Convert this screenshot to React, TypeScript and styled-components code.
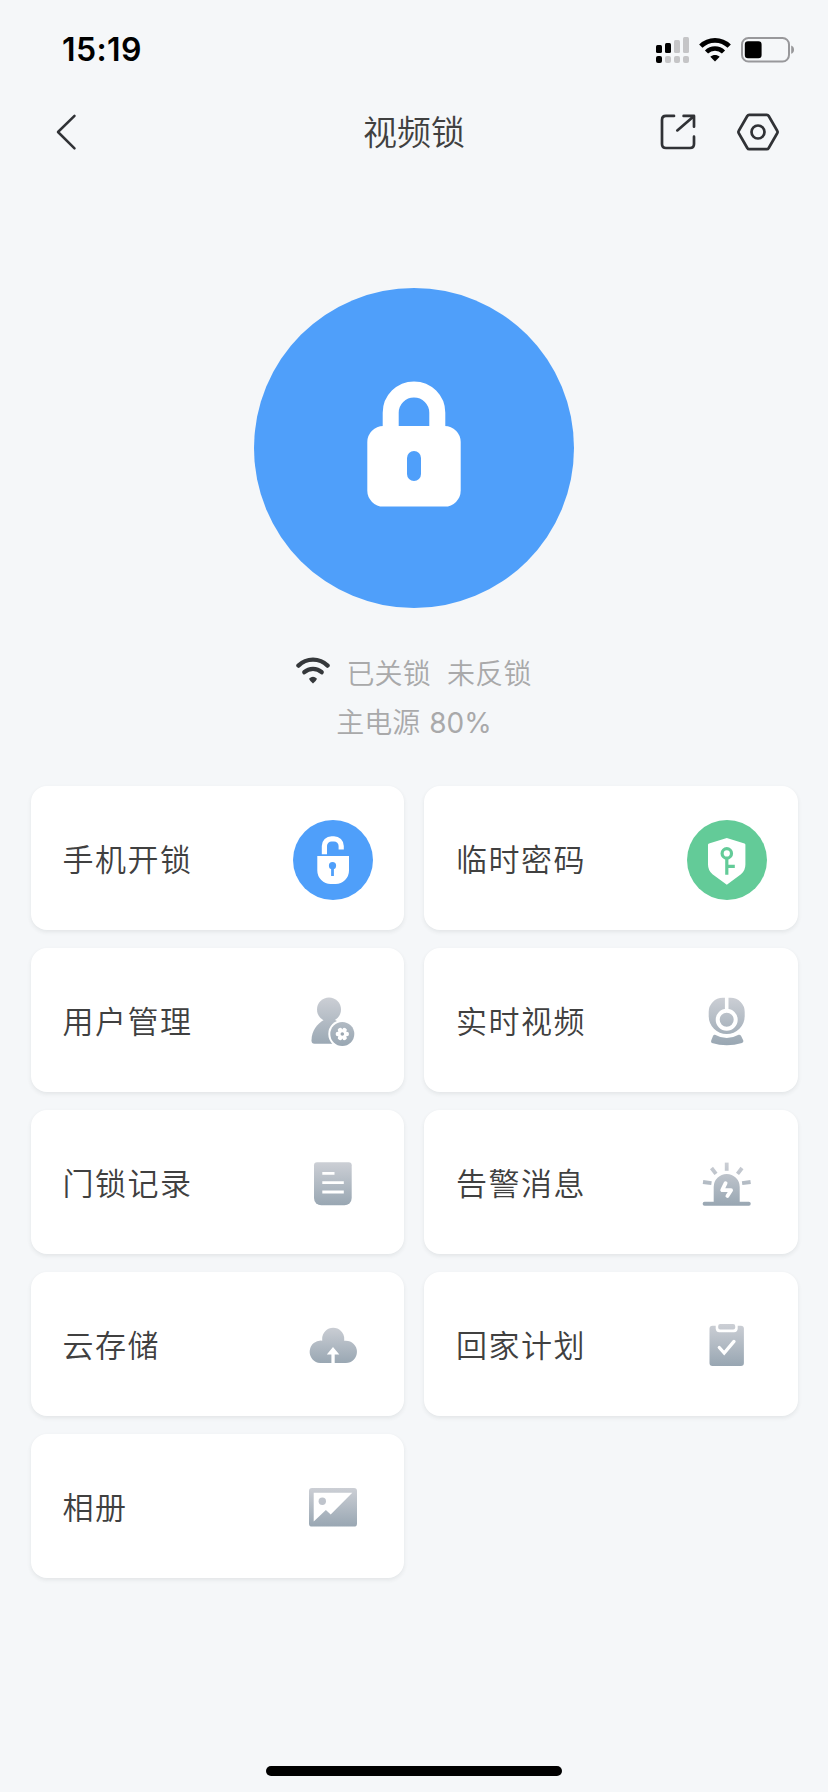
import React from "react";
import styled, { createGlobalStyle } from "styled-components";

const GlobalStyle = createGlobalStyle`
  * { box-sizing: border-box; }
  html, body { margin: 0; padding: 0; background: #f5f7f9; }
  svg { display: block; flex: none; }
`;

const Screen = styled.div`
  display: flex;
  flex-direction: column;
  width: 828px;
  height: 1792px;
  background: #f5f7f9;
  color: #404040;
  font-family: Inter, "Noto Sans CJK SC", sans-serif;
`;

const StatusBar = styled.div`
  display: flex;
  align-items: center;
  justify-content: space-between;
  height: 99px;
  padding: 0 33px 0 62px;
`;

const Clock = styled.div`
  font-size: 32px;
  font-weight: 600;
  line-height: 40px;
  letter-spacing: 0.4px;
  color: #000;
`;

const StatusIcons = styled.div`
  display: flex;
  align-items: center;
  gap: 10px;
`;

const NavBar = styled.header`
  display: grid;
  grid-template-columns: 1fr auto 1fr;
  align-items: center;
  height: 66px;
  padding: 0 47px 0 54px;
`;

const Title = styled.h1`
  margin: 0 7px 3px 0;
  font-size: 34px;
  font-weight: 350;
  line-height: 50px;
  font-family: "Noto Sans CJK SC", sans-serif;
`;

const NavActions = styled.div`
  display: flex;
  justify-content: flex-end;
  gap: 38px;
`;

const LockButton = styled.div`
  display: flex;
  align-self: center;
  width: 320px;
  height: 320px;
  margin-top: 123px;
  border-radius: 50%;
  background: #4f9ffa;
`;

const LockState = styled.div`
  display: flex;
  flex-direction: column;
  align-items: center;
  height: 98px;
  margin: 42px 0 38px;
  color: #a9a9aa;
  font-size: 28px;
  font-weight: 350;
`;

const StateLine = styled.div`
  display: flex;
  align-items: center;
  height: 49px;
  line-height: 49px;

  > svg {
    margin-bottom: 8px;
  }
`;

const StateText = styled.span<{ $before: number }>`
  margin-left: ${(p) => p.$before}px;
  letter-spacing: 0.2px;
`;

const Percent = styled.span`
  margin-left: 9px;
  font-weight: 400;
`;

const CardGrid = styled.main`
  display: grid;
  grid-template-columns: 1fr 1fr;
  gap: 18px 20px;
  padding: 0 30.5px;
`;

const Card = styled.div`
  display: flex;
  align-items: center;
  justify-content: space-between;
  height: 144px;
  padding: 4px 31px 0 32px;
  border-radius: 16px;
  background: #fff;
  box-shadow: 0 2px 4px rgba(40, 50, 60, 0.09);
`;

const CardLabel = styled.span`
  font-size: 31px;
  line-height: 46px;
  letter-spacing: 1.5px;
  font-weight: 350;
`;

const HomeIndicator = styled.div`
  align-self: center;
  width: 296px;
  height: 10px;
  margin: auto 0 16px;
  border-radius: 5px;
  background: #000;
`;

const SignalIcon = () => (
  <svg width="33" height="26" viewBox="0 0 33 26" fill="#c5c5c7">
    <rect y="8" width="6" height="8" rx="1.5" fill="#000" />
    <rect x="9" y="6" width="6" height="10" rx="1.5" fill="#000" />
    <rect x="18" y="3" width="6" height="13" rx="1.5" />
    <rect x="27" y="0" width="6" height="16" rx="1.5" />
    <rect y="19" width="6" height="7" rx="2" fill="#000" />
    <rect x="9" y="19" width="6" height="7" rx="2" />
    <rect x="18" y="19" width="6" height="7" rx="2" />
    <rect x="27" y="19" width="6" height="7" rx="2" />
  </svg>
);

const WifiStatusIcon = () => (
  <svg width="32" height="24" viewBox="0 0 32 24" fill="none" stroke="#000">
    <path d="M1.8 8.2C9.6.4 22.4.4 30.2 8.2" strokeWidth="4.7" />
    <path d="M7.5 14C12.2 9.4 19.8 9.4 24.5 14" strokeWidth="4.5" />
    <path d="M11.3 18.7C14 16.4 18 16.4 20.7 18.7L16 23.6Z" fill="#000" stroke="none" />
  </svg>
);

const BatteryIcon = () => (
  <svg width="54" height="26" viewBox="0 0 54 26">
    <rect x="1" y="1" width="47" height="23.5" rx="6.5" fill="none" stroke="#98989b" strokeWidth="2" />
    <rect x="3.8" y="4.2" width="16.8" height="17" rx="3.2" />
    <path d="M50.2 8.6a4.4 4.4 0 0 1 0 8.2z" fill="#98989b" />
  </svg>
);

const BackIcon = () => (
  <svg width="26" height="40" viewBox="0 0 26 40" fill="none" stroke="#303236" strokeWidth="2.5" strokeLinecap="round" strokeLinejoin="round">
    <path d="M20.5 3.8 4 20l16.5 16.3" />
  </svg>
);

const ShareIcon = () => (
  <svg width="38" height="40" viewBox="0 0 38 40" fill="none" stroke="#303236" strokeWidth="2.7" strokeLinecap="round" strokeLinejoin="round">
    <path d="M15 3.9H7Q3 3.9 3 7.9V32Q3 36 7 36H31Q35 36 35 32V24.7" />
    <path d="M24.6 3.9H35V14.7M18.3 18.4 34.2 4.7" />
  </svg>
);

const SettingsIcon = () => (
  <svg width="46" height="40" viewBox="0 0 46 40" fill="none" stroke="#303236" strokeWidth="2.7" strokeLinejoin="round">
    <path d="M14.2 2.8H31.8Q33 2.8 33.7 4L42.2 18.7Q43 20 42.2 21.3L33.7 36Q33 37.2 31.8 37.2H14.2Q13 37.2 12.3 36L3.8 21.3Q3 20 3.8 18.7L12.3 4Q13 2.8 14.2 2.8Z" />
    <circle cx="23" cy="20" r="6.5" />
  </svg>
);

const PadlockIcon = () => (
  <svg width="320" height="320" viewBox="0 0 320 320">
    <path d="M136.7 142V124.7a23.3 23.3 0 0 1 46.6 0V142" fill="none" stroke="#fff" strokeWidth="16" />
    <rect x="113.3" y="138" width="93.4" height="80.6" rx="16" fill="#fff" />
    <rect x="153" y="163" width="14" height="30" rx="7" fill="#4f9ffa" />
  </svg>
);

const WifiSmallIcon = () => (
  <svg width="34" height="28" viewBox="0 0 34 28" fill="none" stroke="#35383b" strokeLinecap="round">
    <path d="M2.4 8.6C10.6.6 23.4.6 31.6 8.6" strokeWidth="4.3" />
    <path d="M8.3 15.2C13.2 10.8 20.8 10.8 25.7 15.2" strokeWidth="4.3" />
    <path d="M13 21.8Q17 17.6 21 21.8Q20 24.3 17 26.6Q14 24.3 13 21.8Z" fill="#35383b" stroke="none" />
  </svg>
);

const CardIcon = ({ children }: { children: React.ReactNode }) => (
  <svg width="80" height="80" viewBox="0 0 80 80">{children}</svg>
);

const Silver = ({ id, top, bottom }: { id: string; top: number; bottom: number }) => (
  <linearGradient id={id} gradientUnits="userSpaceOnUse" x1="40" y1={top} x2="40" y2={bottom}>
    <stop offset="0" stopColor="#cccfd5" />
    <stop offset="1" stopColor="#98a6b2" />
  </linearGradient>
);

const UnlockIcon = () => (
  <CardIcon>
    <circle cx="40" cy="40" r="40" fill="#4f9ffa" />
    <path d="M31.4 34.2V26a7.2 7.2 0 0 1 7.2-7.2H41a7.2 7.2 0 0 1 7.2 7.2v3.4" fill="none" stroke="#fff" strokeWidth="5.2" />
    <path d="M24.3 36H56V50.6A13.4 13.4 0 0 1 42.6 64H37.7A13.4 13.4 0 0 1 24.3 50.6Z" fill="#fff" />
    <circle cx="39.5" cy="45.7" r="3.6" fill="#4f9ffa" />
    <path d="M39.5 46V56" stroke="#4f9ffa" strokeWidth="2.8" />
  </CardIcon>
);

const ShieldIcon = () => (
  <CardIcon>
    <circle cx="40" cy="40" r="40" fill="#63cb98" />
    <path d="M39.8 18 57.5 23.4Q58.4 23.7 58.4 24.7V44.5Q58.4 50.5 54 54.2L39.8 64.7 25.5 54.2Q21 50.5 21 44.5V24.7Q21 23.7 22 23.4Z" fill="#fff" />
    <g fill="none" stroke="#63cb98" strokeWidth="3.2">
      <circle cx="39.8" cy="33.4" r="4.7" />
      <path d="M39.8 38V54.7M39.8 46.4H47.8" />
    </g>
  </CardIcon>
);

const UserIcon = () => (
  <CardIcon>
    <Silver id="user" top={15} bottom={65} />
    <circle cx="36" cy="27.6" r="12" fill="url(#user)" />
    <path d="M31.5 37.5C24 41.5 18.5 49 18.5 58.5Q18.5 61.7 21.5 61.7H50V42L41 37.5Z" fill="url(#user)" />
    <circle cx="49.3" cy="52" r="14" fill="#fff" />
    <circle cx="49.3" cy="52" r="12" fill="url(#user)" />
    <g fill="#fff">
      {[0, 60, 120, 180, 240, 300].map((a) => (
        <circle key={a} cx="53.7" cy="52" r="2.3" transform={`rotate(${a} 49.3 52)`} />
      ))}
      <circle cx="49.3" cy="52" r="4.6" />
    </g>
    <circle cx="49.3" cy="52" r="1.8" fill="#9da8b2" />
  </CardIcon>
);

const CameraIcon = () => (
  <CardIcon>
    <Silver id="camera" top={15} bottom={64} />
    <path d="M35.7 15.8H43.7A14 14 0 0 1 57.7 29.8V34A18 18 0 0 1 21.7 34V29.8A14 14 0 0 1 35.7 15.8Z" fill="url(#camera)" />
    <path d="M39.7 14V30" stroke="#fff" strokeWidth="3.6" />
    <circle cx="39.7" cy="37.7" r="9" fill="url(#camera)" stroke="#fff" strokeWidth="4" />
    <path d="M28 52.8Q39.7 59.4 51.6 52.8Q53 52.3 54 53.8L56.3 58.5Q56.8 60.2 55 60.9Q39.7 65.5 24.9 60.9Q23.6 60.2 24.2 58.5L26 54Q26.8 52.3 28 52.8Z" fill="url(#camera)" />
  </CardIcon>
);

const RecordIcon = () => (
  <CardIcon>
    <Silver id="record" top={18} bottom={62} />
    <path d="M24 18.3H55.7Q58.7 18.3 58.7 21.3V54A7.3 7.3 0 0 1 51.4 61.3H28.3A7.3 7.3 0 0 1 21 54V21.3Q21 18.3 24 18.3Z" fill="url(#record)" />
    <path d="M29.3 29.4H41.5M29.3 38.6H50.8M29.3 48H50.8" stroke="#fff" strokeWidth="2.8" />
  </CardIcon>
);

const AlarmIcon = () => (
  <CardIcon>
    <Silver id="alarm" top={18} bottom={62} />
    <path d="M26.7 59V43a13 13 0 0 1 26 0V59Z" fill="url(#alarm)" />
    <rect x="15.7" y="57.8" width="48" height="4" rx="1.8" fill="url(#alarm)" />
    <path d="M38.6 39.2 35.2 46.2H44.1L40.4 52" fill="none" stroke="#fff" strokeWidth="3.8" strokeLinecap="round" strokeLinejoin="round" />
    <path d="M37.8 18.6H41.6V26.8H37.8Z" fill="url(#alarm)" />
    <path d="M24.5 24 29 29.8M55 24 50.5 29.8M16 38 24.5 39.2M63.6 38 55.1 39.2" fill="none" stroke="url(#alarm)" strokeWidth="3.8" />
  </CardIcon>
);

const CloudIcon = () => (
  <CardIcon>
    <Silver id="cloud" top={20} bottom={58} />
    <path d="M27.2 57A11.2 11.2 0 1 1 29.2 34.7V32.8A11 11 0 0 1 51.2 32.8V34.7H52.8A11.15 11.15 0 0 1 52.8 57Z" fill="url(#cloud)" />
    <path d="M40 41 46.3 48.6H41.7V57.2H38.4V48.6H33.8Z" fill="#fff" />
  </CardIcon>
);

const PlanIcon = () => (
  <CardIcon>
    <Silver id="plan" top={18} bottom={60} />
    <rect x="22.5" y="19.8" width="34.4" height="40.2" rx="3" fill="url(#plan)" />
    <path d="M28.7 17H50.7V22.3Q50.7 26.2 47 26.2H32.4Q28.7 26.2 28.7 22.3Z" fill="#fff" />
    <rect x="31.2" y="18" width="17" height="5.5" rx="2" fill="url(#plan)" />
    <path d="M32.3 41.5 37.2 47 47 35.4" fill="none" stroke="#fff" strokeWidth="3.3" strokeLinecap="round" />
  </CardIcon>
);

const AlbumIcon = () => (
  <CardIcon>
    <Silver id="album" top={20} bottom={59} />
    <rect x="16" y="20" width="48" height="38.6" rx="3" fill="url(#album)" />
    <path d="M20.7 24.7H59.3L37.7 46.4 32.9 42 20.7 53.5Z" fill="#fff" />
    <circle cx="29.3" cy="33.2" r="3.7" fill="#bfc4cc" />
  </CardIcon>
);

const features: { label: string; Icon: React.FC }[] = [
  { label: "手机开锁", Icon: UnlockIcon },
  { label: "临时密码", Icon: ShieldIcon },
  { label: "用户管理", Icon: UserIcon },
  { label: "实时视频", Icon: CameraIcon },
  { label: "门锁记录", Icon: RecordIcon },
  { label: "告警消息", Icon: AlarmIcon },
  { label: "云存储", Icon: CloudIcon },
  { label: "回家计划", Icon: PlanIcon },
  { label: "相册", Icon: AlbumIcon },
];

export default function App() {
  return (
    <Screen lang="zh-CN">
      <GlobalStyle />
      <StatusBar>
        <Clock>15:19</Clock>
        <StatusIcons>
          <SignalIcon />
          <WifiStatusIcon />
          <BatteryIcon />
        </StatusIcons>
      </StatusBar>
      <NavBar>
        <BackIcon />
        <Title>视频锁</Title>
        <NavActions>
          <ShareIcon />
          <SettingsIcon />
        </NavActions>
      </NavBar>
      <LockButton>
        <PadlockIcon />
      </LockButton>
      <LockState>
        <StateLine>
          <WifiSmallIcon />
          <StateText $before={16}>已关锁</StateText>
          <StateText $before={16}>未反锁</StateText>
        </StateLine>
        <StateLine>
          主电源<Percent>80%</Percent>
        </StateLine>
      </LockState>
      <CardGrid>
        {features.map(({ label, Icon }) => (
          <Card key={label}>
            <CardLabel>{label}</CardLabel>
            <Icon />
          </Card>
        ))}
      </CardGrid>
      <HomeIndicator />
    </Screen>
  );
}
